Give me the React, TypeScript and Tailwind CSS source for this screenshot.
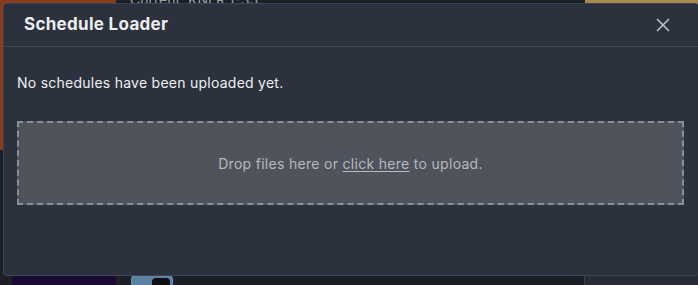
import { X } from 'lucide-react';

export default function App() {
    return (
        <div className="relative w-[698px] h-[285px] overflow-hidden bg-[#1b1f26] font-['Inter',sans-serif]">
            {/* page behind the modal */}
            <div className="flex flex-col h-full">
                <div className="flex h-[150px]">
                    <div className="w-[116px] bg-[#8a3b1c]" />
                    <div className="flex-1 pl-[14px] -mt-[8px] text-[14px] leading-[16px] text-[#9aa0a8] whitespace-nowrap">Current: KNLR 1-35</div>
                    <div className="w-[113px] h-[10px] bg-[#a88a4a]" />
                </div>
                <div className="flex-1" />
                <div className="flex h-[10px] pl-[12px]">
                    <div className="w-[104px] bg-[#1b0b34]" />
                    <div className="ml-[15px] w-[42px] h-[12px] rounded-[4px] bg-[#5b82a1] border border-[#6e94b2] flex justify-end pr-[2px] pt-[2px]">
                        <div className="w-[18px] h-[12px] rounded-[4px] bg-[#0d0f12]" />
                    </div>
                    <div className="flex-1" />
                    <div className="w-[114px] bg-[#272c36] border-l border-[#3a404a]" />
                </div>
            </div>

            {/* modal */}
            <div className="absolute left-[3px] top-[3px] w-[696px] h-[273px] rounded-[4px] border border-[#3b4452] bg-[#2b323d] flex flex-col">
                <div className="h-[43px] shrink-0 flex items-center justify-between border-b border-[#3e4a59] pl-[20px] pr-[24px]">
                    <h1 className="text-[17px] font-bold text-[#eceef1] tracking-[0.3px]">Schedule Loader</h1>
                    <X size={22} strokeWidth={1.9} className="text-[#b9bdc4]" />
                </div>
                <div className="px-[13px] pt-[26px]">
                    <p className="text-[14px] leading-[20px] tracking-[0.25px] text-[#eef0f2]">No schedules have been uploaded yet.</p>
                    <div className="mt-[28px] w-[667px] h-[84px] border-2 border-dashed border-[#8b8f96] bg-[#4f535b] flex items-center justify-center">
                        <span className="text-[14px] tracking-[0.3px] text-[#b5b8bd]">
                            Drop files here or <span className="underline underline-offset-2">click here</span> to upload.
                        </span>
                    </div>
                </div>
            </div>
        </div>
    );
}
